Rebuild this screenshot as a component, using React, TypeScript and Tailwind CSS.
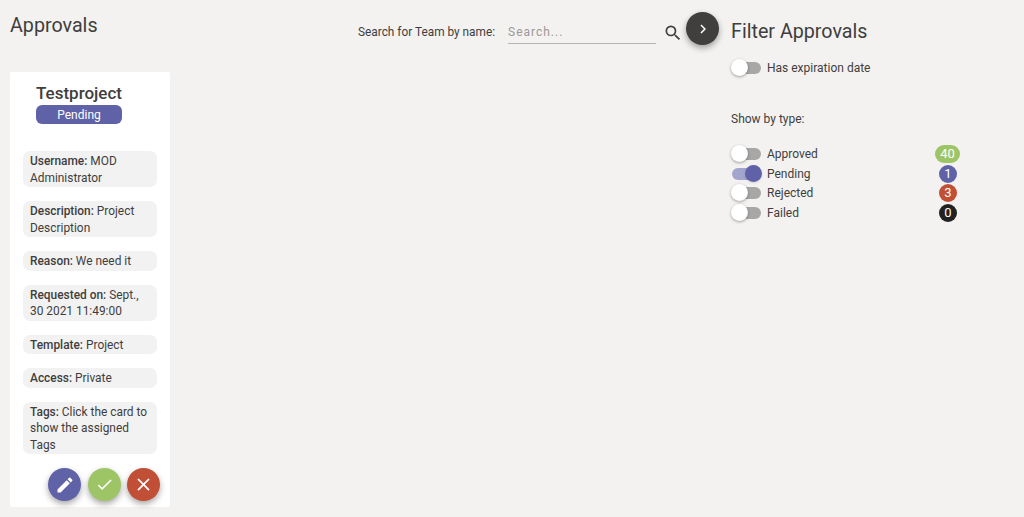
import { MdCheck, MdChevronRight, MdClose, MdEdit, MdSearch } from "react-icons/md";

const infoRows = [
  { label: "Username:", value: "MOD Administrator" },
  { label: "Description:", value: "Project Description" },
  { label: "Reason:", value: "We need it" },
  { label: "Requested on:", value: "Sept., 30 2021 11:49:00" },
  { label: "Template:", value: "Project" },
  { label: "Access:", value: "Private" },
  { label: "Tags:", value: "Click the card to show the assigned Tags" },
];

const typeFilters = [
  { name: "Approved", count: "40", on: false, badge: "bg-[#9dc566] w-[25px] mr-0" },
  { name: "Pending", count: "1", on: true, badge: "bg-[#5f62a6] w-[18px] mr-[3px]" },
  { name: "Rejected", count: "3", on: false, badge: "bg-[#c14f35] w-[18px] mr-[3px]" },
  { name: "Failed", count: "0", on: false, badge: "bg-[#222222] w-[18px] mr-[3px]" },
];

function Toggle({ on }: { on: boolean }) {
  return (
    <div className="relative ml-[1px] h-[12px] w-[29px] shrink-0">
      <div className={`h-full w-full rounded-full ${on ? "bg-[#a3a5cf]" : "bg-[#a8a7a6]"}`} />
      {on ? (
        <div className="absolute right-[-1px] top-[-3px] h-[17px] w-[17px] rounded-full bg-[#5f62a6] shadow-sm" />
      ) : (
        <div className="absolute left-[-1px] top-[-3px] h-[17px] w-[17px] rounded-full bg-white shadow-[0_1px_3px_rgba(0,0,0,0.35)]" />
      )}
    </div>
  );
}

export default function App() {
  return (
    <div className="relative flex h-[517px] w-[1024px] overflow-hidden bg-[#f3f2f1] font-['Roboto',sans-serif] text-[#3f3e3d]">
      <div className="ml-[10px] w-[160px] shrink-0">
        <h1 className="mt-[13px] h-[26px] text-[19.7px] leading-[26px]">Approvals</h1>
        <div className="mt-[33px] h-[435px] rounded-[2px] bg-white px-[13px] pt-[11px]">
          <div className="ml-[13px] w-[86px]">
            <div className="h-[22px] text-[17px] font-medium leading-[21px] whitespace-nowrap">Testproject</div>
            <div className="h-[19px] rounded-[6px] bg-[#5f62a6] text-center text-[12px] leading-[20px] text-white">
              Pending
            </div>
          </div>
          <div className="mt-[27px] flex flex-col gap-[14px]">
            {infoRows.map((row) => (
              <div key={row.label} className="rounded-[7px] bg-[#f2f2f2] pb-[1px] pl-[7px] pr-[4px] pt-[2px] text-[11.9px] leading-[16.5px]">
                <span className="font-medium">{row.label}</span> {row.value}
              </div>
            ))}
          </div>
          <div className="mr-[-3px] mt-[14px] flex justify-end gap-[6.5px]">
            <button className="flex h-[33px] w-[33px] items-center justify-center rounded-full bg-[#5f62a6] text-white shadow-[0_3px_6px_rgba(0,0,0,0.35)]">
              <MdEdit size={20} />
            </button>
            <button className="flex h-[33px] w-[33px] items-center justify-center rounded-full bg-[#9dc566] text-white shadow-[0_3px_6px_rgba(0,0,0,0.35)]">
              <MdCheck size={19} />
            </button>
            <button className="flex h-[33px] w-[33px] items-center justify-center rounded-full bg-[#c14f35] text-white shadow-[0_3px_6px_rgba(0,0,0,0.35)]">
              <MdClose size={21} />
            </button>
          </div>
        </div>
      </div>

      <div className="ml-[188px] mt-[21px] flex h-[24px] w-[325px] shrink-0 items-start">
        <span className="mt-[3px] w-[138px] shrink-0 text-[11.85px] leading-[16px] whitespace-nowrap">Search for Team by name:</span>
        <div className="ml-[12px] h-[23px] w-[148px] shrink-0 border-b border-[#b5b4b3] pt-[3px] text-[12px] leading-[16px] tracking-[1px] text-[#9a9998]">
          Search...
        </div>
        <MdSearch size={20} className="ml-[7px] mt-[2px] shrink-0" />
      </div>

      <button className="absolute left-[686px] top-[12px] flex h-[33px] w-[33px] items-center justify-center rounded-full bg-[#403f3d] text-white shadow-[0_3px_6px_rgba(0,0,0,0.35)]">
        <MdChevronRight size={18} />
      </button>

      <div className="ml-[48px] mt-[20px] w-[229px] shrink-0">
        <h2 className="text-[19.7px] leading-[24px]">Filter Approvals</h2>
        <div className="mt-[16px] flex h-[16px] items-center gap-[6px] text-[12px]">
          <Toggle on={false} />
          <span>Has expiration date</span>
        </div>
        <div className="mt-[35px] text-[12px] leading-[16px]">Show by type:</div>
        <div className="mt-[17px] flex flex-col">
          {typeFilters.map((item) => (
            <div key={item.name} className="flex h-[19.7px] items-center gap-[6px] text-[12px]">
              <Toggle on={item.on} />
              <span>{item.name}</span>
              <span
                className={`ml-auto flex h-[18px] items-center justify-center rounded-full text-[13px] text-white ${item.badge}`}
              >
                {item.count}
              </span>
            </div>
          ))}
        </div>
      </div>
    </div>
  );
}
